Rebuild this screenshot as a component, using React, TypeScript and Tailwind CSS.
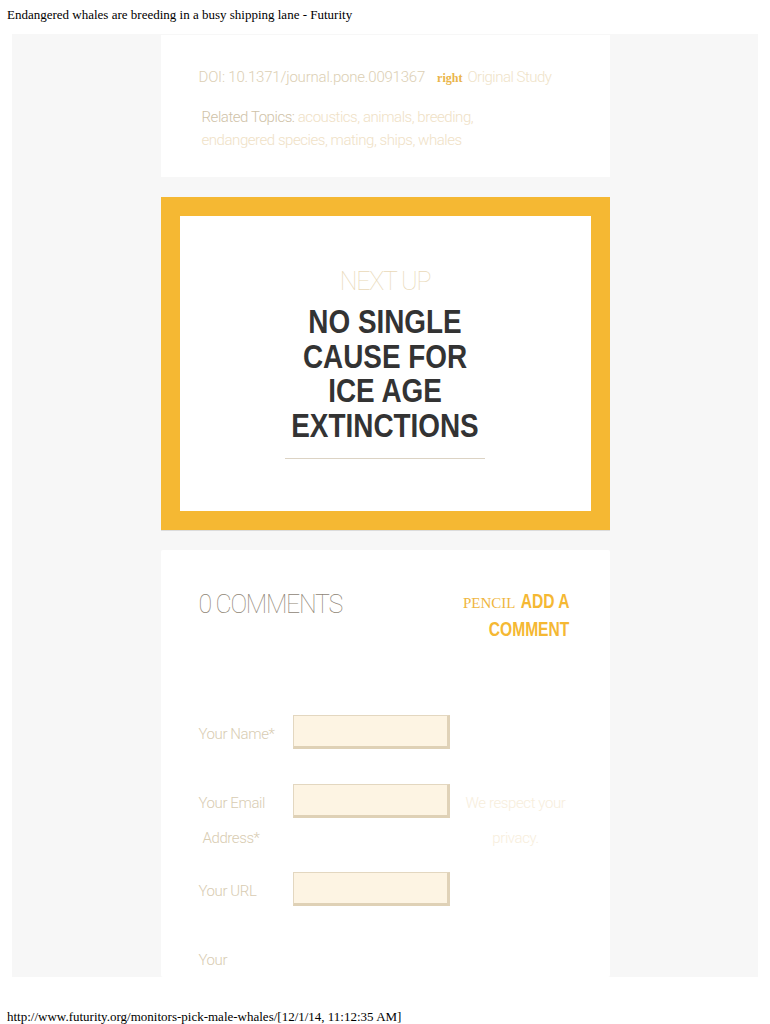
import React from 'react';

const thin = { fontFamily: 'Roboto, "Liberation Sans", Arial, sans-serif' };
const serif = { fontFamily: '"Liberation Serif", "Times New Roman", serif' };
const heavy = { fontFamily: '"Liberation Sans", Arial, sans-serif' };

function Field({ label, label2, aside, aside2 }: { label: string; label2?: string; aside?: string; aside2?: string }) {
  return (
    <div className="flex items-start">
      <div className="w-[94px] shrink-0">
        <div className="h-[33px] pt-[5px] flex items-center text-[15px] text-[#d8ccb2] font-light tracking-[-0.4px]">{label}</div>
        {label2 && (
          <div className="h-[37px] pt-[5px] flex items-center pl-[4px] text-[15px] text-[#d8ccb2] font-light tracking-[-0.4px]">{label2}</div>
        )}
      </div>
      <div className="w-[157px] h-[34px] shrink-0 bg-[#fdf4e3] border border-[#e3d7c0] border-r-[3px] border-b-[3px] border-r-[#e0d2b8] border-b-[#dfd1b6]" />
      {aside && (
        <div className="w-[110px] ml-[12px] text-center">
          <div className="h-[36px] pt-[2px] flex items-center justify-center text-[15px] text-[#f7eedc] font-light tracking-[-0.4px]">{aside}</div>
          <div className="h-[34px] pt-[2px] flex items-center justify-center text-[15px] text-[#f7eedc] font-light tracking-[-0.4px]">{aside2}</div>
        </div>
      )}
    </div>
  );
}

export default function App() {
  return (
    <div className="w-[770px] h-[1024px] bg-white flex flex-col overflow-hidden">
      <div className="h-[34px] shrink-0 pl-[7px] pt-[5px] text-[13px] text-black" style={serif}>
        Endangered whales are breeding in a busy shipping lane - Futurity
      </div>

      <div
        className="mx-[12px] h-[943px] shrink-0 bg-[#f7f7f7] overflow-hidden flex flex-col items-center pt-[1px] gap-[20px]"
        style={thin}
      >
        {/* meta card */}
        <div className="w-[449px] h-[142px] shrink-0 bg-white pl-[38px] pt-[31px]">
          <div className="flex items-baseline h-[20px]">
            <span className="text-[15px] font-light text-[#dccfb4] tracking-[-0.2px]">DOI: 10.1371/journal.pone.0091367</span>
            <span className="ml-[12px] text-[12px] font-bold text-[#eab54a]" style={serif}>
              right
            </span>
            <span className="ml-[5px] text-[15px] font-light text-[#efe3c9] tracking-[-0.5px]">Original Study</span>
          </div>
          <div className="mt-[20px] pl-[3px] flex flex-col text-[15px] leading-[23px] font-light tracking-[-0.45px] text-[#efe1c6]">
            <div>
              <span className="text-[#cfc2a8]">Related Topics:</span> acoustics, animals, breeding,
            </div>
            <div>endangered species, mating, ships, whales</div>
          </div>
        </div>

        {/* next up */}
        <div className="w-[449px] h-[333px] shrink-0 bg-[#f5b833] p-[19px] shadow-[0_1px_0_#dcdcdc]">
          <div className="h-full bg-white flex flex-col items-center pt-[52px]">
            <div className="text-[25px] leading-[28px] font-thin text-[#e9d9b8] tracking-[-1.2px]">NEXT UP</div>
            <div
              className="mt-[8px] w-[300px] text-center text-[34px] leading-[34.5px] font-bold text-[#333333] scale-x-[0.82] origin-center"
              style={heavy}
            >
              NO SINGLE
              <br />
              CAUSE FOR
              <br />
              ICE AGE
              <br />
              EXTINCTIONS
            </div>
            <div className="mt-[16px] w-[200px] h-px bg-[#dcd3c4]" />
          </div>
        </div>

        {/* comments */}
        <div className="w-[449px] h-[427px] shrink-0 bg-white rounded-[2px] pl-[38px] pr-[40px] pt-[38px]">
          <div className="flex justify-between items-start">
            <div className="pt-[3px] text-[25px] leading-[28px] font-thin text-[#8f8676] tracking-[-1.3px]">0 COMMENTS</div>
            <div className="flex flex-col items-end text-[20px] leading-[26px] font-bold text-[#f5b833]" style={heavy}>
              <div className="flex items-baseline">
                <span className="text-[15px] font-normal text-[#efb640] mr-[6px]" style={serif}>
                  PENCIL
                </span>
                <div className="w-[48px] flex justify-end">
                  <span className="whitespace-nowrap scale-x-[0.78] origin-right inline-block">ADD A</span>
                </div>
              </div>
              <div className="w-[80px] flex justify-end">
                <span className="whitespace-nowrap scale-x-[0.78] origin-right inline-block">COMMENT</span>
              </div>
            </div>
          </div>

          <div className="mt-[73px] flex flex-col">
            <Field label="Your Name*" />
            <div className="h-[35px]" />
            <Field label="Your Email" label2="Address*" aside="We respect your" aside2="privacy." />
            <div className="h-[18px]" />
            <Field label="Your URL" />
            <div className="mt-[43px] text-[15px] text-[#d8ccb2] font-light tracking-[-0.4px]">Your</div>
          </div>
        </div>
      </div>

      <div className="shrink-0 pl-[7px] pt-[30px] text-[13px] text-black" style={serif}>
        http://www.futurity.org/monitors-pick-male-whales/[12/1/14, 11:12:35 AM]
      </div>
    </div>
  );
}
